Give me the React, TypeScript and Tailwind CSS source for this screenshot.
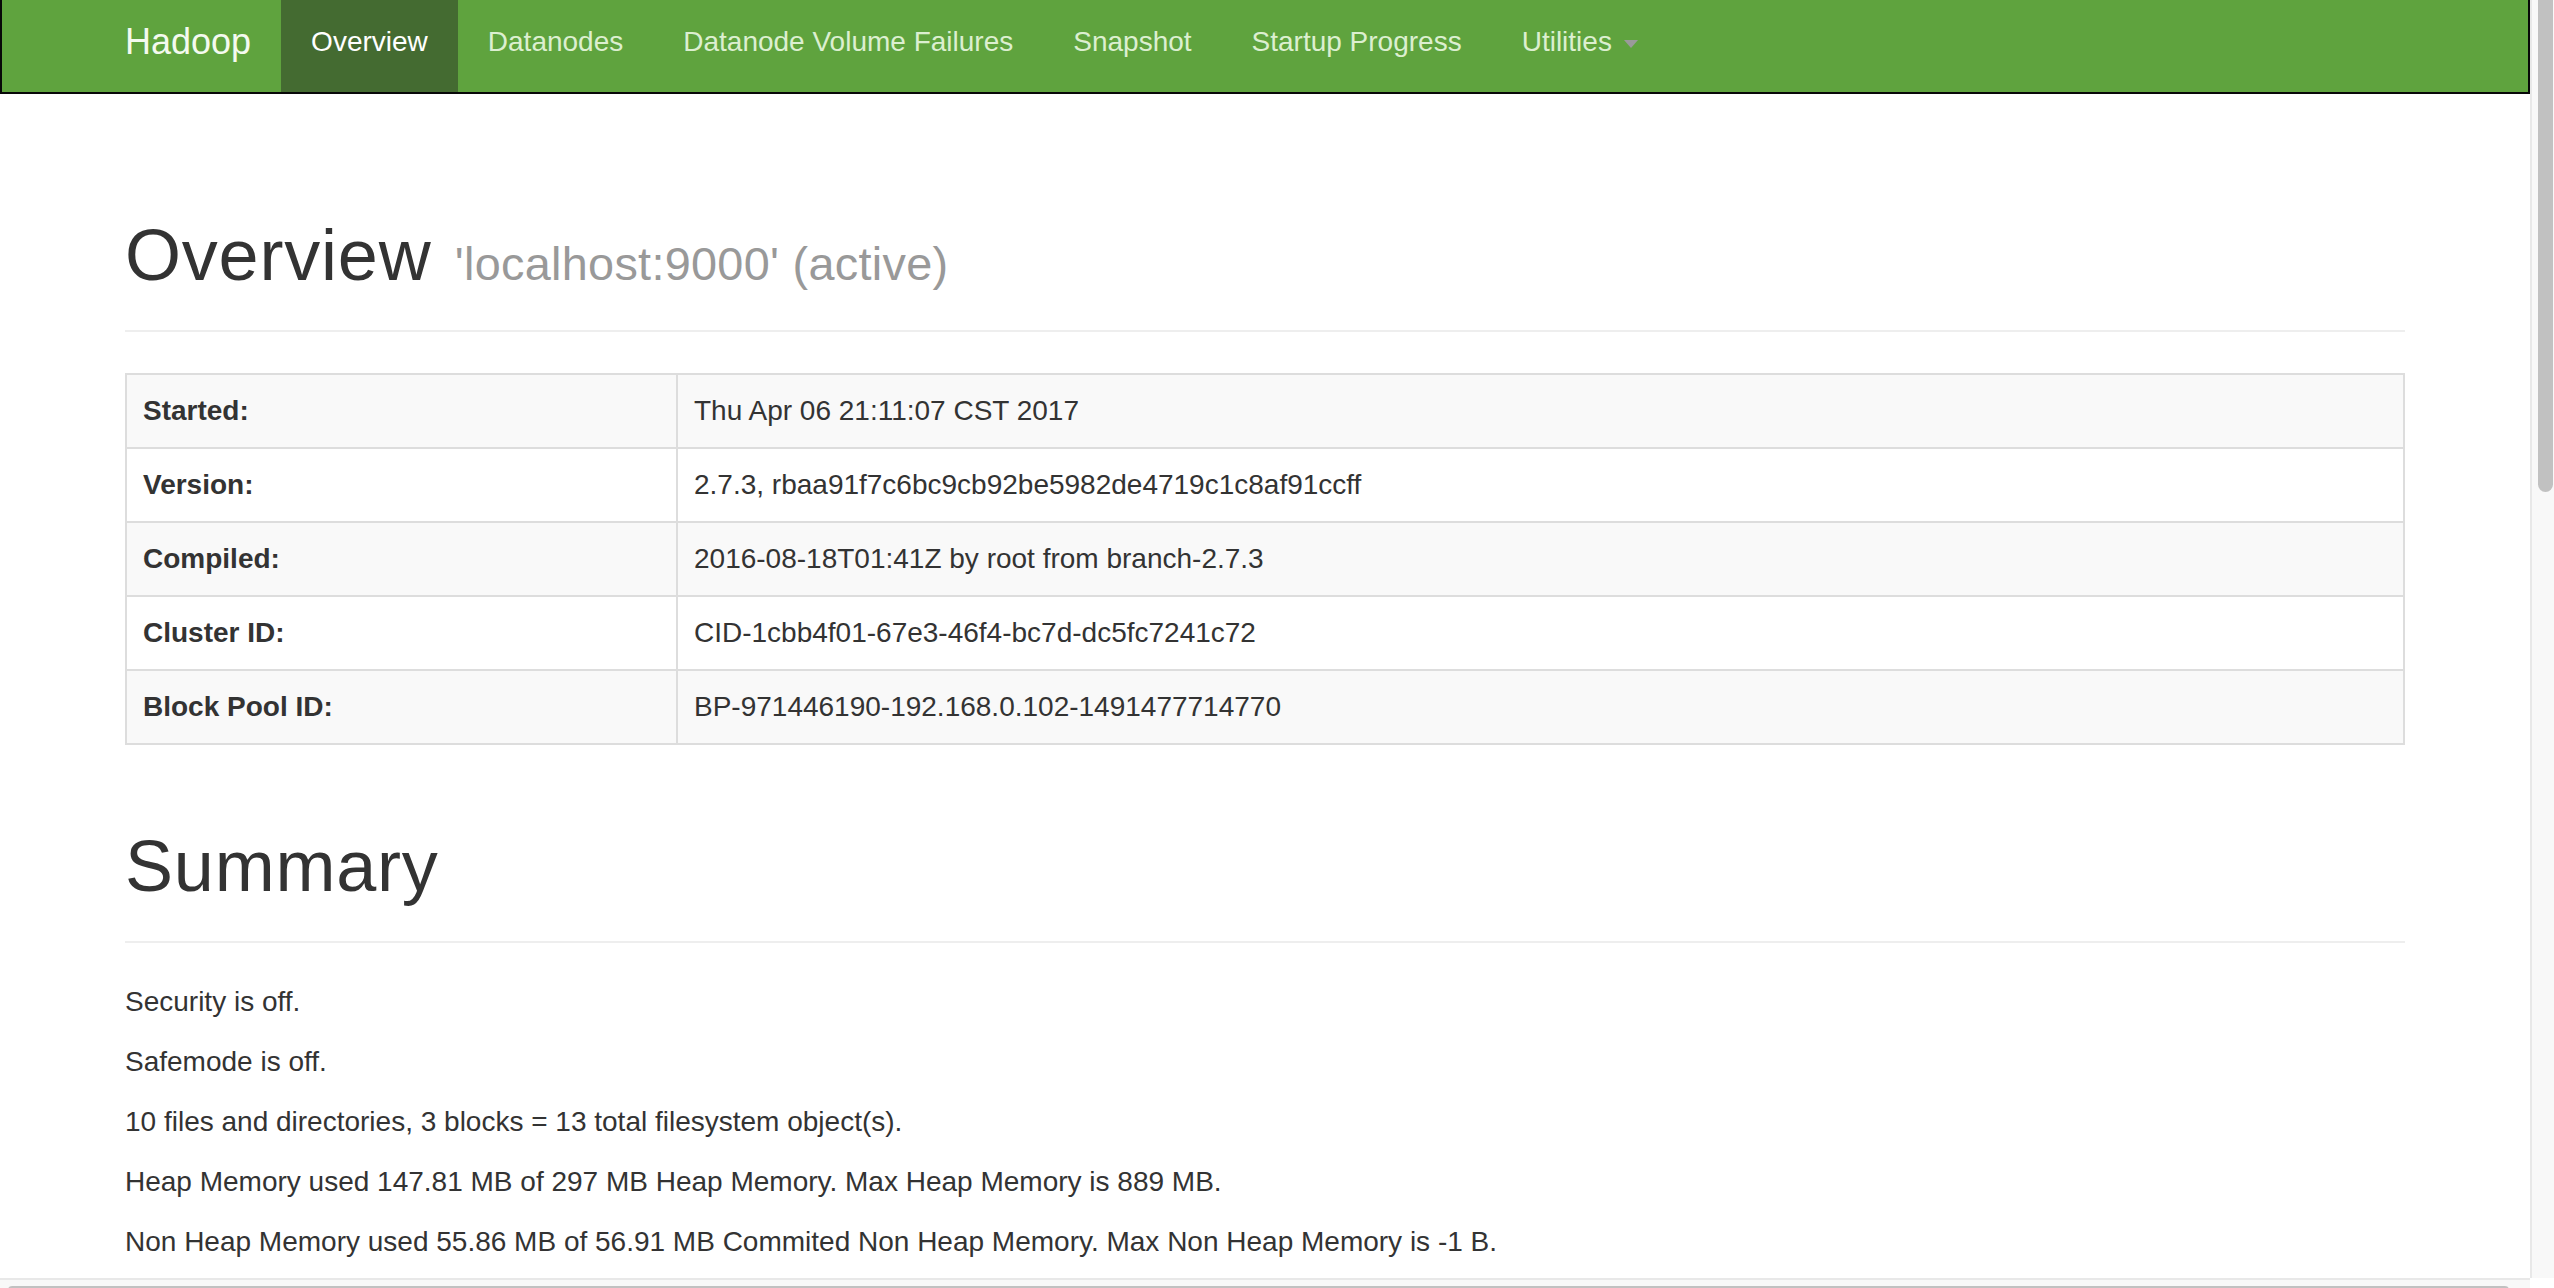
const NAV_LINKS = [
  { label: 'Overview', active: true },
  { label: 'Datanodes' },
  { label: 'Datanode Volume Failures' },
  { label: 'Snapshot' },
  { label: 'Startup Progress' },
]

const INFO_ROWS: [string, string][] = [
  ['Started:', 'Thu Apr 06 21:11:07 CST 2017'],
  ['Version:', '2.7.3, rbaa91f7c6bc9cb92be5982de4719c1c8af91ccff'],
  ['Compiled:', '2016-08-18T01:41Z by root from branch-2.7.3'],
  ['Cluster ID:', 'CID-1cbb4f01-67e3-46f4-bc7d-dc5fc7241c72'],
  ['Block Pool ID:', 'BP-971446190-192.168.0.102-1491477714770'],
]

const SUMMARY_LINES = [
  'Security is off.',
  'Safemode is off.',
  '10 files and directories, 3 blocks = 13 total filesystem object(s).',
  'Heap Memory used 147.81 MB of 297 MB Heap Memory. Max Heap Memory is 889 MB.',
  'Non Heap Memory used 55.86 MB of 56.91 MB Commited Non Heap Memory. Max Non Heap Memory is -1 B.',
]

export default function App() {
  return (
    <div className="h-[1288px] w-full overflow-hidden bg-white font-['Liberation_Sans',Arial,sans-serif] text-[28px] leading-[40px] text-[#333]">
      <div className="flex h-[1278px]">
        <div className="w-[2530px] shrink-0 overflow-hidden">
          <Navbar />
          <div className="mx-auto w-[2280px]">
            <PageHeader title="Overview" small="'localhost:9000' (active)" className="mt-[119px]" />

            <table className="mt-[41px] w-full border-2 border-[#ddd]">
              <tbody>
                {INFO_ROWS.map(([label, value], i) => (
                  <tr key={label} className={i % 2 === 0 ? 'bg-[#f9f9f9]' : 'bg-white'}>
                    <th className="w-[551px] border-2 border-[#ddd] px-[16px] py-[16px] text-left align-top font-bold">
                      {label}
                    </th>
                    <td className="border-2 border-[#ddd] px-[16px] py-[16px] align-top">{value}</td>
                  </tr>
                ))}
              </tbody>
            </table>

            <PageHeader title="Summary" className="mt-[79px]" />

            <div className="mt-[39px]">
              {SUMMARY_LINES.map((line) => (
                <p key={line} className="mb-[20px]">
                  {line}
                </p>
              ))}
            </div>
          </div>
        </div>

        {/* vertical scrollbar */}
        <div className="h-full w-[24px] border-l-2 border-[#e8e8e8] bg-[#f8f8f8] pl-[6px]">
          <div className="h-[492px] w-[15px] rounded-b-[8px] bg-[#c1c1c1]" />
        </div>
      </div>

      {/* horizontal scrollbar */}
      <div className="flex h-[10px]">
        <div className="w-[2530px] border-t-2 border-[#e8e8e8] bg-[#f8f8f8] pl-[8px] pt-[6px]">
          <div className="h-[8px] w-[2501px] rounded-[4px] bg-[#c1c1c1]" />
        </div>
        <div className="w-[24px] bg-white" />
      </div>
    </div>
  )
}

function Navbar() {
  return (
    <nav className="h-[94px] border-x-2 border-b-2 border-[#080808] bg-[#5fa33e]">
      <div className="mx-auto flex w-[2280px]">
        <a className="pr-[30px] pt-[22px] text-[36px] leading-[40px] text-[#f4faef]">Hadoop</a>
        <ul className="flex">
          {NAV_LINKS.map((link) => (
            <li key={link.label}>
              <a
                className={
                  link.active
                    ? 'block h-[92px] bg-[#446b31] px-[30px] pt-[22px] text-white'
                    : 'block h-[92px] px-[30px] pt-[22px] text-[#dcefd0]'
                }
              >
                {link.label}
              </a>
            </li>
          ))}
          <li>
            <a className="block h-[92px] px-[30px] pt-[22px] text-[#dcefd0]">
              Utilities{' '}
              <span className="ml-[4px] inline-block border-x-[7px] border-t-[8px] border-x-transparent border-t-[#9a9a9a] align-middle" />
            </a>
          </li>
        </ul>
      </div>
    </nav>
  )
}

function PageHeader({ title, small, className }: { title: string; small?: string; className?: string }) {
  return (
    <div className={`border-b-2 border-[#eee] pb-[18px] ${className ?? ''}`}>
      <h1 className="mb-[15px] text-[72px] leading-[84px] font-medium tracking-[0.8px]">
        {title}
        {small && (
          <small className="ml-[10px] text-[46.8px] leading-none font-normal tracking-[0.3px] text-[#999]">
            {' '}
            {small}
          </small>
        )}
      </h1>
    </div>
  )
}
